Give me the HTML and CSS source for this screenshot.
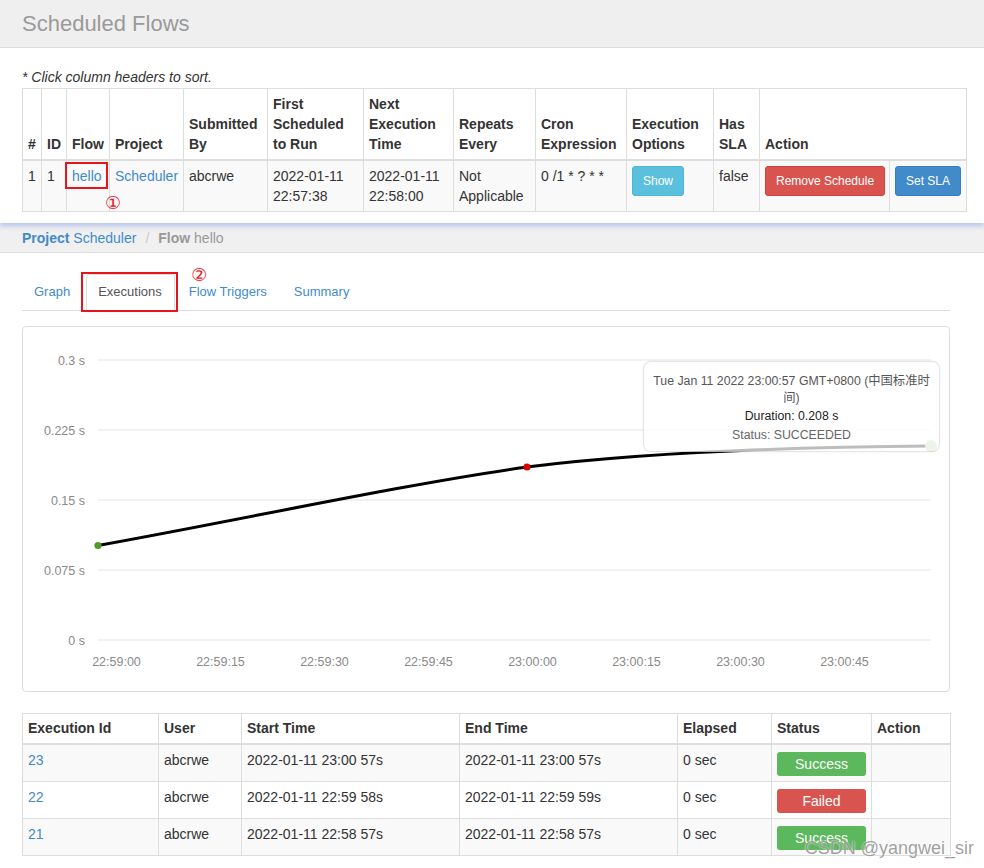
FILE: index.html
```html
<!DOCTYPE html>
<html lang="en">
<head>
<meta charset="utf-8">
<title>Scheduled Flows</title>
<link rel="stylesheet" href="styles.css">
</head>
<body>
<section class="sched">
  <header class="page-head"><h1>Scheduled Flows</h1></header>
  <div class="sched-body">
    <p class="note">* Click column headers to sort.</p>
    <table class="grid sched-table">
      <colgroup>
        <col class="w-num"><col class="w-id"><col class="w-flow"><col class="w-proj"><col class="w-sub"><col class="w-first"><col class="w-next"><col class="w-rep"><col class="w-cron"><col class="w-opt"><col class="w-sla"><col class="w-rm"><col class="w-set">
      </colgroup>
      <thead>
        <tr>
          <th>#</th><th>ID</th><th>Flow</th><th>Project</th><th>Submitted By</th><th>First Scheduled to Run</th><th>Next Execution Time</th><th>Repeats Every</th><th>Cron Expression</th><th>Execution Options</th><th>Has SLA</th><th colspan="2">Action</th>
        </tr>
      </thead>
      <tbody>
        <tr>
          <td>1</td>
          <td>1</td>
          <td><span class="mark mark-one"><a href="#">hello</a><span class="circ circ-one">①</span></span></td>
          <td><a href="#">Scheduler</a></td>
          <td>abcrwe</td>
          <td>2022-01-11 22:57:38</td>
          <td>2022-01-11 22:58:00</td>
          <td>Not Applicable</td>
          <td>0 /1 * ? * *</td>
          <td><button class="btn btn-info">Show</button></td>
          <td>false</td>
          <td><button class="btn btn-danger">Remove Schedule</button></td>
          <td><button class="btn btn-primary">Set SLA</button></td>
        </tr>
      </tbody>
    </table>
  </div>
</section>

<nav class="crumb">
  <a href="#" class="crumb-link"><b>Project</b> Scheduler</a><span class="sep">/</span><span class="crumb-active"><b>Flow</b> hello</span>
</nav>

<main class="flow">
  <ul class="tabs">
    <li><a href="#">Graph</a></li>
    <li class="active"><a href="#">Executions</a><span class="circ circ-two">②</span></li>
    <li><a href="#">Flow Triggers</a></li>
    <li><a href="#">Summary</a></li>
  </ul>

  <div class="chart-panel">
    <svg class="chart" viewBox="23 327 926 364" width="926" height="364">
      <g stroke="#e6e6e6" stroke-width="1.2">
        <line x1="98" x2="931" y1="360" y2="360"/>
        <line x1="98" x2="931" y1="430" y2="430"/>
        <line x1="98" x2="931" y1="500" y2="500"/>
        <line x1="98" x2="931" y1="570" y2="570"/>
        <line x1="98" x2="931" y1="640" y2="640"/>
      </g>
      <g class="axis" text-anchor="end">
        <text x="85" y="364.5">0.3 s</text>
        <text x="85" y="434.5">0.225 s</text>
        <text x="85" y="504.5">0.15 s</text>
        <text x="85" y="574.5">0.075 s</text>
        <text x="85" y="644.5">0 s</text>
      </g>
      <g class="axis" text-anchor="middle">
        <text x="116.5" y="665.5">22:59:00</text>
        <text x="220.5" y="665.5">22:59:15</text>
        <text x="324.5" y="665.5">22:59:30</text>
        <text x="428.5" y="665.5">22:59:45</text>
        <text x="532.5" y="665.5">23:00:00</text>
        <text x="636.5" y="665.5">23:00:15</text>
        <text x="740.5" y="665.5">23:00:30</text>
        <text x="844.5" y="665.5">23:00:45</text>
      </g>
      <path d="M98,545.5 C240,520 400,485 527,467 C650,452 800,447 931,446" fill="none" stroke="#000" stroke-width="3"/>
      <circle cx="98" cy="545.5" r="3.6" fill="#4f9a25"/>
      <circle cx="527" cy="467" r="3.6" fill="#d90000"/>
      <circle cx="931" cy="446" r="6" fill="#bcd9a8"/>
    </svg>
    <div class="tooltip">
      <div class="tt-date">Tue Jan 11 2022 23:00:57 GMT+0800 (中国标准时<br>间)</div>
      <div class="tt-dur">Duration: 0.208 s</div>
      <div class="tt-status">Status: SUCCEEDED</div>
    </div>
  </div>

  <table class="grid exec-table">
    <colgroup>
      <col class="e-id"><col class="e-user"><col class="e-start"><col class="e-end"><col class="e-el"><col class="e-status"><col class="e-act">
    </colgroup>
    <thead>
      <tr><th>Execution Id</th><th>User</th><th>Start Time</th><th>End Time</th><th>Elapsed</th><th>Status</th><th>Action</th></tr>
    </thead>
    <tbody>
      <tr>
        <td><a href="#">23</a></td><td>abcrwe</td><td>2022-01-11 23:00 57s</td><td>2022-01-11 23:00 57s</td><td>0 sec</td><td><span class="status ok">Success</span></td><td></td>
      </tr>
      <tr>
        <td><a href="#">22</a></td><td>abcrwe</td><td>2022-01-11 22:59 58s</td><td>2022-01-11 22:59 59s</td><td>0 sec</td><td><span class="status fail">Failed</span></td><td></td>
      </tr>
      <tr>
        <td><a href="#">21</a></td><td>abcrwe</td><td>2022-01-11 22:58 57s</td><td>2022-01-11 22:58 57s</td><td>0 sec</td><td><span class="status ok">Success</span></td><td></td>
      </tr>
    </tbody>
  </table>
</main>

<div class="watermark">CSDN @yangwei_sir</div>
</body>
</html>
```

FILE: styles.css
```css
* { box-sizing: border-box; }

html, body { height: 100%; }

body {
  margin: 0;
  font-family: "Liberation Sans", Arial, "Noto Sans CJK SC", sans-serif;
  font-size: 14px;
  line-height: 20px;
  color: #333;
  background: #fff;
  position: relative;
  overflow: hidden;
}

a { color: #428bca; text-decoration: none; }

/* ---------- top: scheduled flows ---------- */
.sched {
  position: relative;
  z-index: 2;
  background: #fff;
  padding-bottom: 11px;
  box-shadow: 0 3px 5px rgba(95, 130, 230, 0.4);
}

.page-head {
  height: 48px;
  background: #efefef;
  border-bottom: 1px solid #dcdcdc;
  padding: 0 22px;
}

.page-head h1 {
  margin: 0;
  font-size: 22px;
  font-weight: normal;
  line-height: 47px;
  color: #9a9a9a;
}

.sched-body { padding: 19px 18px 0 22px; }

.note { margin: 0 0 1px; font-style: italic; }

.grid {
  border-collapse: collapse;
  border-spacing: 0;
  table-layout: fixed;
}

.grid th,
.grid td {
  border: 1px solid #ddd;
  padding: 5px;
  text-align: left;
}

.grid thead th {
  border-bottom: 2px solid #ddd;
  vertical-align: bottom;
  font-weight: bold;
}

.grid td { vertical-align: top; }

.sched-table { width: 944px; }
.sched-table tbody tr { background: #f9f9f9; }

.w-num { width: 19px; }
.w-id { width: 25px; }
.w-flow { width: 43px; }
.w-proj { width: 74px; }
.w-sub { width: 84px; }
.w-first { width: 96px; }
.w-next { width: 90px; }
.w-rep { width: 82px; }
.w-cron { width: 91px; }
.w-opt { width: 87px; }
.w-sla { width: 46px; }
.w-rm { width: 130px; }
.w-set { width: 77px; }

.btn {
  display: inline-block;
  padding: 5px 10px;
  font-family: inherit;
  font-size: 12px;
  line-height: 18px;
  color: #fff;
  white-space: nowrap;
  border: 1px solid transparent;
  border-radius: 3px;
  cursor: pointer;
}

.btn-info { background: #5bc0de; border-color: #46b8da; }
.btn-danger { background: #d9534f; border-color: #d43f3a; }
.btn-primary { background: #428bca; border-color: #357ebd; }

/* annotations */
.mark { position: relative; display: inline-block; }

.mark-one::after {
  content: "";
  position: absolute;
  left: -7px;
  right: -6px;
  top: -4px;
  bottom: -3px;
  border: 2px solid #e8141c;
}

.circ {
  position: absolute;
  font-family: "DejaVu Sans", "Noto Sans CJK SC", sans-serif;
  font-size: 18px;
  line-height: 18px;
  color: #e8141c;
  white-space: nowrap;
}

.circ-one { left: 33px; top: 28px; }
.circ-two { left: 105px; top: -8px; }

/* ---------- breadcrumb ---------- */
.crumb {
  position: relative;
  z-index: 1;
  height: 30px;
  padding: 5px 22px 4px;
  background: #f0f0f0;
  border-bottom: 1px solid #ddd;
}

.crumb .sep { color: #ccc; margin: 0 9px; }
.crumb-active { color: #999; }

/* ---------- flow page ---------- */
.flow { padding: 21px 34px 0 22px; }

.tabs {
  list-style: none;
  margin: 0;
  padding: 0;
  display: flex;
  border-bottom: 1px solid #ddd;
  font-size: 13px;
}

.tabs li {
  position: relative;
  margin: 0 2px -1px 0;
}

.tabs li:first-child { margin-right: 3px; }

.tabs a {
  display: block;
  padding: 7px 12px 8px 11px;
  line-height: 20px;
  border: 1px solid transparent;
  border-radius: 4px 4px 0 0;
}

.tabs li.active a {
  color: #555;
  background: #fff;
  border-color: #ddd #ddd transparent;
}

.tabs li.active::after {
  content: "";
  position: absolute;
  left: -5px;
  right: -3px;
  top: -2px;
  bottom: -1px;
  border: 2px solid #e8141c;
  pointer-events: none;
}

.chart-panel {
  position: relative;
  margin-top: 15px;
  height: 366px;
  border: 1px solid #ddd;
  border-radius: 4px;
}

.chart { display: block; }

.axis text {
  font-family: "Liberation Sans", Arial, sans-serif;
  font-size: 12.5px;
  fill: #8a8a8a;
}

.tooltip {
  position: absolute;
  left: 620px;
  top: 34px;
  width: 297px;
  height: 91px;
  padding: 11px 6px 6px;
  text-align: center;
  font-size: 12.3px;
  background: rgba(255, 255, 255, 0.74);
  border: 1px solid rgba(0, 0, 0, 0.1);
  border-radius: 8px;
  box-shadow: 0 0 3px rgba(0, 0, 0, 0.06);
}

.tt-date { line-height: 17px; color: #555; white-space: nowrap; }
.tt-dur { line-height: 19px; color: #222; }
.tt-status { line-height: 19px; color: #666; }

.exec-table { margin-top: 21px; width: 928px; }
.exec-table thead th { padding: 4px 5px 5px; }
.exec-table tbody tr:nth-child(odd) { background: #f9f9f9; }

.e-id { width: 136px; }
.e-user { width: 83px; }
.e-start { width: 218px; }
.e-end { width: 218px; }
.e-el { width: 94px; }
.e-status { width: 100px; }
.e-act { width: 79px; }

.status {
  display: block;
  margin-top: 2px;
  height: 24px;
  line-height: 24px;
  text-align: center;
  color: #fff;
  border-radius: 3px;
}

.status.ok { background: #5cb85c; }
.status.fail { background: #d9534f; }

.watermark {
  position: absolute;
  right: 10px;
  bottom: 10px;
  font-size: 18px;
  line-height: 20px;
  color: rgba(130, 130, 130, 0.75);
  text-shadow: 0 0 2px #fff;
  pointer-events: none;
}
```
